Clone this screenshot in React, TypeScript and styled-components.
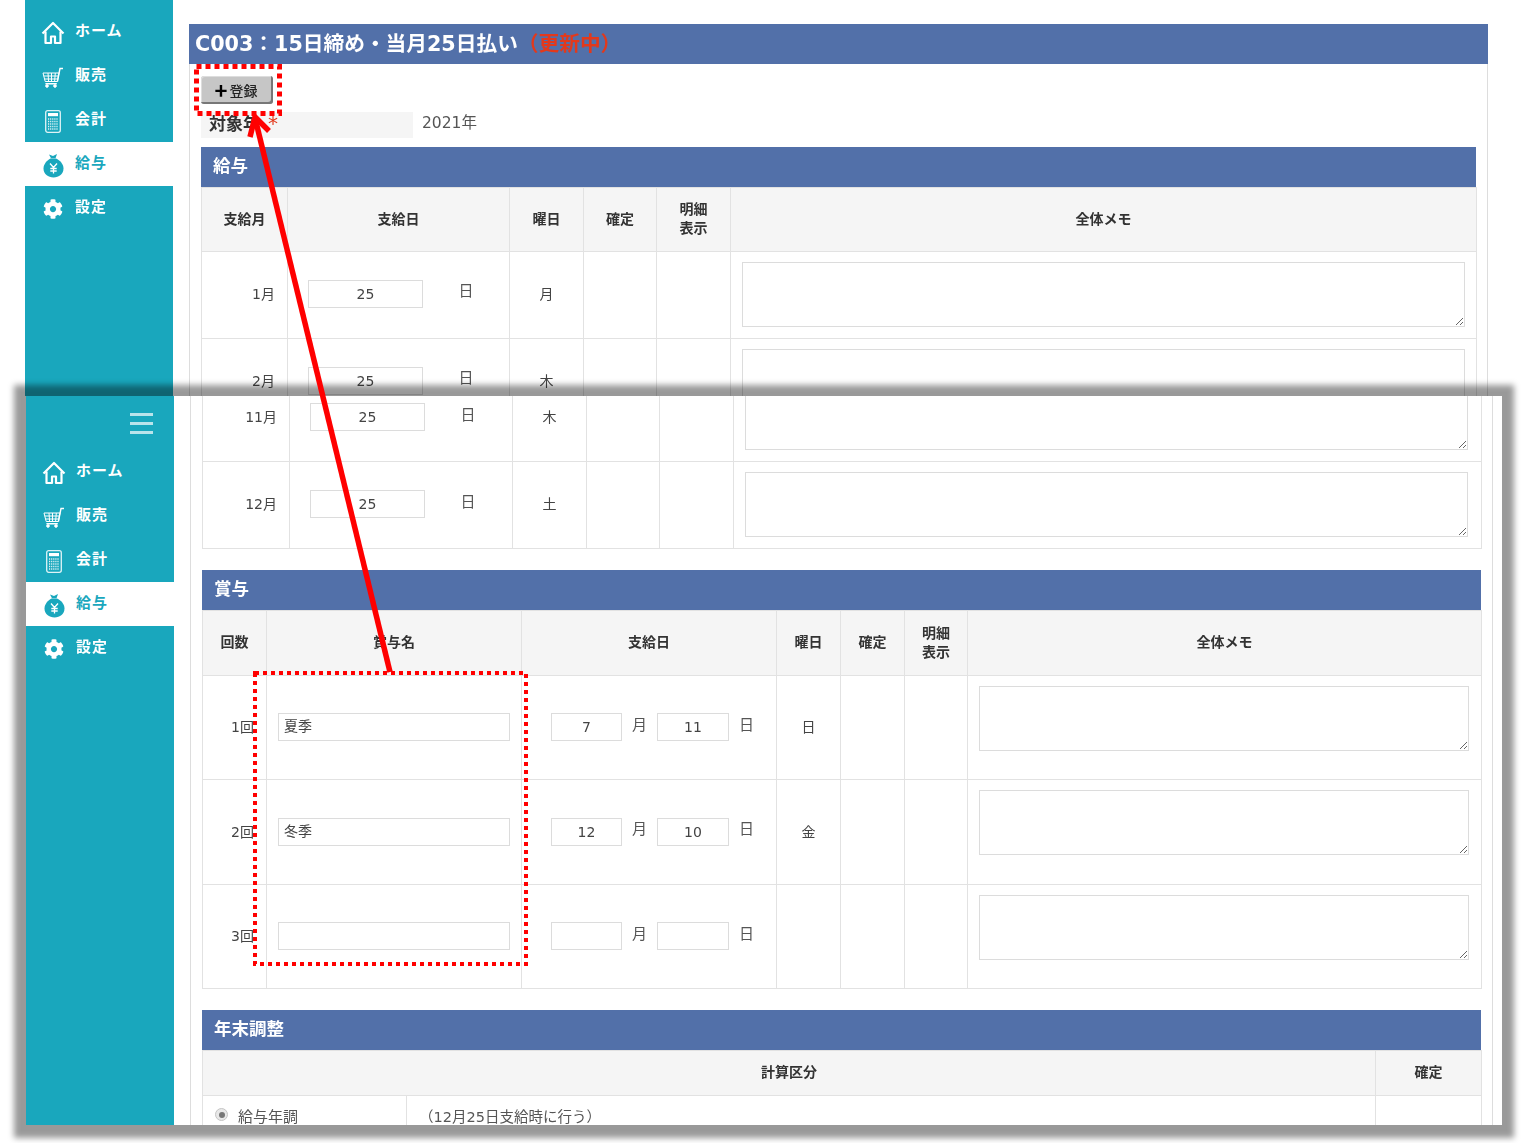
import React from 'react';
import styled, { createGlobalStyle } from 'styled-components';
import { FaCog } from 'react-icons/fa';

const GlobalStyle = createGlobalStyle`
  html, body {
    margin: 0;
    background: #fff;
    overflow: hidden;
  }
  body {
    font-family: "DejaVu Sans", "Noto Sans CJK JP", sans-serif;
    color: #444;
  }
`;

const Page = styled.div`
  position: relative;
  width: 1528px;
  height: 1143px;
  overflow: hidden;
`;

const TopShot = styled.div`
  display: flex;
  height: 396px;
  margin-left: 25px;
  overflow: hidden;
  filter: blur(0.45px);
`;

const BottomShot = styled.div`
  position: relative;
  display: flex;
  width: 1476px;
  height: 729px;
  margin-left: 26px;
  background: #fff;
  box-shadow: 0 1px 6px 12px rgba(0, 0, 0, 0.4);
`;

const BottomInner = styled.div`
  display: flex;
  width: 100%;
  height: 100%;
  overflow: hidden;
  filter: blur(0.45px);
`;

const Sidebar = styled.aside<{ $top?: number }>`
  flex: 0 0 148px;
  padding-top: ${(p) => p.$top ?? 0}px;
  background: #19a7bd;
`;

const Nav = styled.nav<{ $edge?: boolean }>`
  padding-bottom: 3px;
  box-shadow: ${(p) => (p.$edge ? '-1px 0 0 #136f82' : 'none')};
`;

const MenuToggle = styled.div`
  display: flex;
  flex-direction: column;
  align-items: flex-end;
  gap: 6.5px;
  height: 37px;
  padding: 17px 21px 0 0;
`;

const ToggleLine = styled.span`
  width: 23px;
  height: 2.5px;
  background: #b9e4eb;
`;

const NavItem = styled.div<{ $active?: boolean }>`
  display: flex;
  align-items: center;
  gap: 10px;
  height: 44px;
  padding-left: 16px;
  background: ${(p) => (p.$active ? '#fff' : 'transparent')};
  color: ${(p) => (p.$active ? '#19a7bd' : '#fff')};
`;

const NavIcon = styled.span`
  display: flex;
  justify-content: center;
  align-items: center;
  width: 24px;
  height: 24px;
  margin-top: 2px;
`;

const NavLabel = styled.span`
  margin-top: -5px;
  font-size: 15px;
  font-weight: 700;
  letter-spacing: 1px;
`;

const Main = styled.main`
  flex: 1;
  min-width: 0;
`;

const TopPanel = styled.div`
  width: 1299px;
  margin: 24px 0 0 16px;
  border: solid #ddd;
  border-width: 0 1px;
  box-sizing: border-box;
`;

const BottomPanel = styled.div`
  width: 1303px;
  height: 100%;
  margin-left: 16px;
  padding: 0 11px;
  border: solid #ddd;
  border-width: 0 1px;
  box-sizing: border-box;
  overflow: hidden;
`;

const TitleBar = styled.h1`
  display: flex;
  align-items: center;
  height: 40px;
  margin: 0 -1px;
  padding: 0 0 5px 6px;
  box-sizing: border-box;
  background: #5270a9;
  color: #fff;
  font-size: 20.7px;
  font-weight: 700;
`;

const TitleStatus = styled.span`
  color: #e2391c;
`;

const PanelBody = styled.div`
  padding: 12px 11px 0;
`;

const AddButton = styled.button`
  display: flex;
  align-items: center;
  justify-content: center;
  gap: 2px;
  width: 72px;
  height: 28px;
  padding: 0 2px 0 0;
  border: 0;
  border-radius: 3px;
  background: #c6c6c6;
  box-shadow: inset -2px -2px 0 #777, inset 1px 1px 0 #ddd;
  color: #222;
  font: 500 14px "Noto Sans CJK JP", sans-serif;
`;

const PlusMark = styled.span`
  color: #000;
  font-size: 22px;
  font-weight: 700;
  line-height: 1;
  margin-top: -2px;
`;

const YearRow = styled.div`
  display: flex;
  align-items: center;
  height: 26px;
  margin: 8px 0 9px;
`;

const YearLabel = styled.div`
  display: flex;
  align-items: center;
  width: 204px;
  height: 21px;
  padding: 0 0 5px 8px;
  background: #f5f5f5;
  color: #333;
  font-size: 17px;
  font-weight: 700;
`;

const Required = styled.span`
  margin-left: 8px;
  color: #e2391c;
  font-size: 20px;
  font-weight: 400;
`;

const YearValue = styled.span`
  margin: -8px 0 0 9px;
  font-size: 15.5px;
  color: #555;
`;

const SectionHead = styled.h2`
  display: flex;
  align-items: center;
  height: 39.5px;
  margin: 0;
  padding: 0 0 5px 12px;
  box-sizing: border-box;
  background: #5270a9;
  color: #fff;
  font-size: 17.5px;
  font-weight: 700;
`;

const Table = styled.table<{ $shift?: number; $gap?: number }>`
  width: 100%;
  margin-top: ${(p) => p.$shift ?? 0}px;
  margin-bottom: ${(p) => p.$gap ?? 0}px;
  border-collapse: collapse;
  table-layout: fixed;
  box-sizing: border-box;
`;

const Col = styled.col<{ $w: number }>`
  width: ${(p) => p.$w}px;
`;

const HeadRow = styled.tr<{ $h: number }>`
  height: ${(p) => p.$h}px;
`;

const Th = styled.th`
  padding: 0;
  border: 1px solid #e2e2e2;
  background: #f5f5f5;
  color: #333;
  font-size: 14px;
  line-height: 19px;
  font-weight: 700;
  text-align: center;
`;

const Row = styled.tr<{ $h: number }>`
  height: ${(p) => p.$h}px;
`;

const Td = styled.td<{ $lift?: number }>`
  padding: 0 0 ${(p) => p.$lift ?? 0}px;
  border: 1px solid #e2e2e2;
  font-size: 14px;
  color: #444;
  text-align: center;
`;

const RightTd = styled(Td)`
  padding-right: 12px;
  text-align: right;
`;

const MemoTd = styled.td`
  padding: 10px 0 0 11px;
  border: 1px solid #e2e2e2;
  vertical-align: top;
`;

const DayCell = styled.div`
  display: flex;
  align-items: center;
  margin-bottom: 2px;
  padding-left: 20px;
`;

const DateCell = styled.div`
  display: flex;
  align-items: center;
  padding-left: 29px;
`;

const FieldInput = styled.input<{ $w: number }>`
  width: ${(p) => p.$w}px;
  height: 28px;
  padding: 0 6px;
  border: 1.5px solid #dcdcdc;
  background: #fff;
  box-sizing: border-box;
  color: #444;
  font: 14px "DejaVu Sans", "Noto Sans CJK JP", sans-serif;
  text-align: center;
  outline: none;
`;

const NameInput = styled(FieldInput)`
  display: block;
  margin-left: 11px;
  padding: 0 0 4px 5px;
  text-align: left;
`;

const Unit = styled.span<{ $gap: number; $end?: number }>`
  margin: 0 ${(p) => p.$end ?? 0}px 8px ${(p) => p.$gap}px;
  font-size: 15px;
  color: #555;
`;

const Memo = styled.textarea<{ $w: number }>`
  display: block;
  width: ${(p) => p.$w}px;
  height: 65px;
  border: 1.5px solid #dcdcdc;
  box-sizing: border-box;
  outline: none;
`;

const AdjustTd = styled.td`
  padding: 11px 0 0 12px;
  border: 1px solid #e2e2e2;
  font-size: 14.5px;
  line-height: 20px;
  color: #555;
  vertical-align: top;
`;

const AdjustLabel = styled.label`
  display: flex;
  align-items: center;
  gap: 10px;
  font-size: 15px;
`;

const RadioMark = styled.span`
  display: flex;
  align-items: center;
  justify-content: center;
  width: 11px;
  height: 11px;
  border: 1px solid #c4c4c4;
  border-radius: 50%;
  background: #e8e8e8;
  margin-top: -4px;

  &::after {
    content: '';
    width: 6px;
    height: 6px;
    border-radius: 50%;
    background: #777;
  }
`;

const Annotations = styled.svg`
  position: absolute;
  top: 0;
  left: 0;
  pointer-events: none;
`;

const HomeIcon = () => (
  <svg width="24" height="24" viewBox="0 0 24 24" fill="none" stroke="#fff" strokeWidth="2.2" strokeLinejoin="round">
    <path d="M1.5 12.5 12 2l10.5 10.5" />
    <path d="M4.5 10.5V22h5.5v-6.5h4V22h5.5V10.5" />
  </svg>
);

const CartIcon = () => (
  <svg width="22" height="22" viewBox="0 0 22 22" fill="none" stroke="#fff" strokeWidth="1">
    <path d="M1 7h16l-1.6 8.500H3.200L1 7z" />
    <path d="M1.800 10h14.600M2.600 13h13.200M6 7l.6 8.500M9.500 7v8.500M13.300 7l-.7 8.500" />
    <path d="M15.400 15.500 18 2.500h3M3.400 17.800h11.400" strokeWidth="1.400" />
    <circle cx="5" cy="20" r="1.300" fill="#fff" />
    <circle cx="13" cy="20" r="1.300" fill="#fff" />
  </svg>
);

const CalcIcon = () => (
  <svg width="16" height="23" viewBox="0 0 16 23" fill="none">
    <rect x="0.7" y="0.7" width="14.6" height="21.6" rx="2" stroke="#dff3f6" strokeWidth="1.3" />
    <rect x="3" y="3" width="10" height="3.2" fill="#fff" />
    <path d="M3 9h10M3 11.5h10M3 14h10M3 16.5h10M3 19h10" stroke="#dff3f6" strokeWidth="1.3" strokeDasharray="1.2 0.9" />
  </svg>
);

const BagIcon = () => (
  <svg width="21" height="25" viewBox="0 0 21 25">
    <path d="M6 1.500 10 3l4-2-1.500 4.200h-4.500z" fill="#19a7bd" />
    <path d="M7.500 5.500h5.500C17 7.500 20.500 11 20.500 15.500c0 5.500-4.500 9-10 9s-10-3.500-10-9C.5 11 4 7.500 7.500 5.500z" fill="#19a7bd" />
    <path d="M7 10.500l3.500 4 3.500-4M10.500 14.500v6M7.300 15.500h6.400M7.300 18h6.400" stroke="#fff" strokeWidth="1.300" fill="none" />
  </svg>
);

const navItems = [
  { label: 'ホーム', icon: <HomeIcon /> },
  { label: '販売', icon: <CartIcon /> },
  { label: '会計', icon: <CalcIcon /> },
  { label: '給与', icon: <BagIcon />, active: true },
  { label: '設定', icon: <FaCog size={20} color="#fff" /> },
];

const NavList = () => (
  <>
    {navItems.map((item) => (
      <NavItem key={item.label} $active={item.active}>
        <NavIcon>{item.icon}</NavIcon>
        <NavLabel>{item.label}</NavLabel>
      </NavItem>
    ))}
  </>
);

const topSalaryCols = [86, 222, 74, 73, 74, 746];
const bottomSalaryCols = [87, 223, 74, 73, 74, 748];
const bonusCols = [64, 255, 255, 64, 64, 63, 514];
const adjustCols = [204, 969, 106];

const MultiLine = () => (
  <>
    明細
    <br />
    表示
  </>
);

const SalaryRow = ({ month, day, weekday }: { month: string; day: string; weekday: string }) => (
  <Row $h={87}>
    <RightTd $lift={4}>{month}</RightTd>
    <Td>
      <DayCell>
        <FieldInput $w={115} value={day} readOnly />
        <Unit $gap={35.5}>日</Unit>
      </DayCell>
    </Td>
    <Td $lift={4}>{weekday}</Td>
    <Td />
    <Td />
    <MemoTd>
      <Memo $w={723} readOnly />
    </MemoTd>
  </Row>
);

const BonusRow = ({
  round,
  name,
  month,
  day,
  weekday,
}: {
  round: string;
  name: string;
  month: string;
  day: string;
  weekday: string;
}) => (
  <Row $h={104.5}>
    <RightTd $lift={2}>{round}</RightTd>
    <Td>
      <NameInput $w={232} value={name} readOnly />
    </Td>
    <Td>
      <DateCell>
        <FieldInput $w={71} value={month} readOnly />
        <Unit $gap={10} $end={10}>
          月
        </Unit>
        <FieldInput $w={72} value={day} readOnly />
        <Unit $gap={10}>日</Unit>
      </DateCell>
    </Td>
    <Td $lift={2}>{weekday}</Td>
    <Td />
    <Td />
    <MemoTd>
      <Memo $w={490} readOnly />
    </MemoTd>
  </Row>
);

const Columns = ({ widths }: { widths: number[] }) => (
  <colgroup>
    {widths.map((w, i) => (
      <Col key={i} $w={w} />
    ))}
  </colgroup>
);

const App: React.FC = () => {
  return (
    <Page>
      <GlobalStyle />
      <TopShot>
        <Sidebar $top={10}>
          <NavList />
        </Sidebar>
        <Main>
          <TopPanel>
            <TitleBar>
              C003：15日締め・当月25日払い<TitleStatus>（更新中）</TitleStatus>
            </TitleBar>
            <PanelBody>
              <AddButton>
                <PlusMark>+</PlusMark>登録
              </AddButton>
              <YearRow>
                <YearLabel>
                  対象年<Required>*</Required>
                </YearLabel>
                <YearValue>2021年</YearValue>
              </YearRow>
              <SectionHead>給与</SectionHead>
              <Table>
                <Columns widths={topSalaryCols} />
                <thead>
                  <HeadRow $h={64}>
                    <Th>支給月</Th>
                    <Th>支給日</Th>
                    <Th>曜日</Th>
                    <Th>確定</Th>
                    <Th>
                      <MultiLine />
                    </Th>
                    <Th>全体メモ</Th>
                  </HeadRow>
                </thead>
                <tbody>
                  <SalaryRow month="1月" day="25" weekday="月" />
                  <SalaryRow month="2月" day="25" weekday="木" />
                </tbody>
              </Table>
            </PanelBody>
          </TopPanel>
        </Main>
      </TopShot>
      <BottomShot>
        <BottomInner>
          <Sidebar>
            <Nav $edge>
              <MenuToggle>
                <ToggleLine />
                <ToggleLine />
                <ToggleLine />
              </MenuToggle>
              <NavList />
            </Nav>
          </Sidebar>
          <Main>
            <BottomPanel>
              <Table $shift={-22} $gap={21}>
                <Columns widths={bottomSalaryCols} />
                <tbody>
                  <SalaryRow month="11月" day="25" weekday="木" />
                  <SalaryRow month="12月" day="25" weekday="土" />
                </tbody>
              </Table>
              <SectionHead>賞与</SectionHead>
              <Table $gap={21}>
                <Columns widths={bonusCols} />
                <thead>
                  <HeadRow $h={65}>
                    <Th>回数</Th>
                    <Th>賞与名</Th>
                    <Th>支給日</Th>
                    <Th>曜日</Th>
                    <Th>確定</Th>
                    <Th>
                      <MultiLine />
                    </Th>
                    <Th>全体メモ</Th>
                  </HeadRow>
                </thead>
                <tbody>
                  <BonusRow round="1回" name="夏季" month="7" day="11" weekday="日" />
                  <BonusRow round="2回" name="冬季" month="12" day="10" weekday="金" />
                  <BonusRow round="3回" name="" month="" day="" weekday="" />
                </tbody>
              </Table>
              <SectionHead>年末調整</SectionHead>
              <Table>
                <Columns widths={adjustCols} />
                <thead>
                  <HeadRow $h={45}>
                    <Th colSpan={2}>計算区分</Th>
                    <Th>確定</Th>
                  </HeadRow>
                </thead>
                <tbody>
                  <Row $h={60}>
                    <AdjustTd>
                      <AdjustLabel>
                        <RadioMark />
                        給与年調
                      </AdjustLabel>
                    </AdjustTd>
                    <AdjustTd>（12月25日支給時に行う）</AdjustTd>
                    <AdjustTd />
                  </Row>
                </tbody>
              </Table>
            </BottomPanel>
          </Main>
        </BottomInner>
      </BottomShot>
      <Annotations width="1528" height="1143" viewBox="0 0 1528 1143" fill="none">
        <rect x="196.500" y="66.500" width="83" height="47" stroke="#f00" strokeWidth="5" strokeDasharray="5 4" />
        <rect x="255" y="673" width="271" height="291" stroke="#f00" strokeWidth="4" strokeDasharray="4 4" />
        <path d="M390 672 256 122" stroke="#f00" strokeWidth="5.500" />
        <path d="M250 137 255 117 269 131" stroke="#f00" strokeWidth="5.500" />
      </Annotations>
    </Page>
  );
};

export default App;
